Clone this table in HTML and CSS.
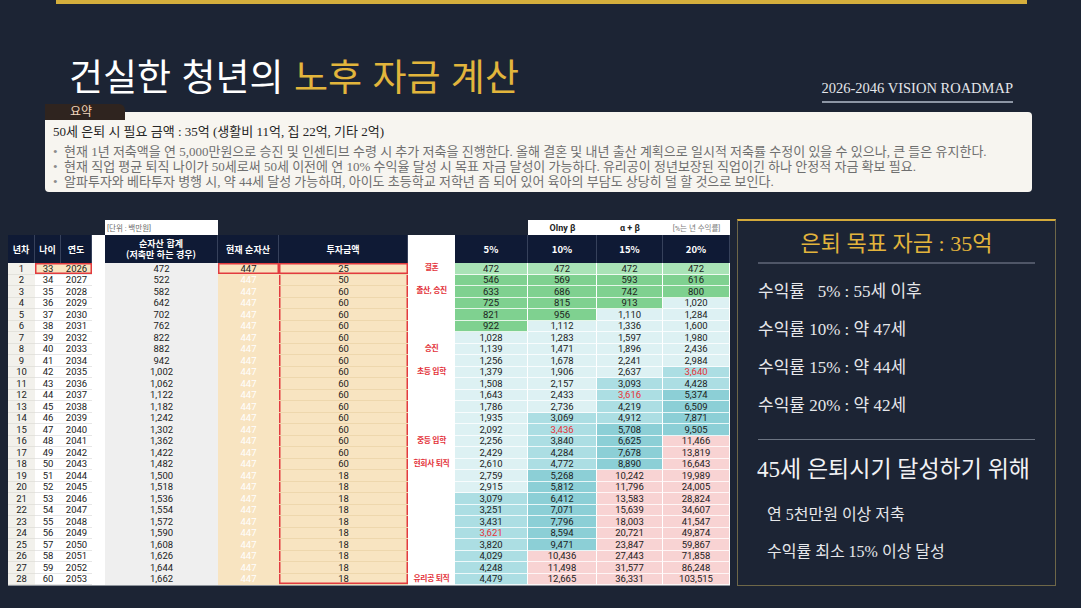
FILE: index.html
```html
<!DOCTYPE html>
<html lang="ko">
<head>
<meta charset="utf-8">
<title>건실한 청년의 노후 자금 계산</title>
<link rel="stylesheet" href="styles.css">
</head>
<body>
<div class="page">
  <div class="topbar"></div>
  <header class="head">
    <h1 class="title">건실한 청년의 <span class="gold">노후 자금 계산</span></h1>
    <div class="roadmap">2026-2046 VISION ROADMAP</div>
  </header>

  <section class="summary">
    <div class="tab">요약</div>
    <div class="sbox">
      <p class="lead">50세 은퇴 시 필요 금액 : 35억 (생활비 11억, 집 22억, 기타 2억)</p>
      <ul class="bullets">
        <li>현재 1년 저축액을 연 5,000만원으로 승진 및 인센티브 수령 시 추가 저축을 진행한다. 올해 결혼 및 내년 출산 계획으로 일시적 저축률 수정이 있을 수 있으나, 큰 들은 유지한다.</li>
        <li>현재 직업 평균 퇴직 나이가 50세로써 50세 이전에 연 10% 수익율 달성 시 목표 자금 달성이 가능하다. 유리공이 정년보장된 직업이긴 하나 안정적 자금 확보 필요.</li>
        <li>알파투자와 베타투자 병행 시, 약 44세 달성 가능하며, 아이도 초등학교 저학년 즘 되어 있어 육아의 부담도 상당히 덜 할 것으로 보인다.</li>
      </ul>
    </div>
  </section>

  <div class="main">
    <div class="sheet">
      <div class="labels">
        <span class="lu">[단위 : 백만원]</span>
        <span class="lb l10">Olny β</span>
        <span class="lb l15">α + β</span>
        <span class="lp">[%는 년 수익률]</span>
      </div>
      <div class="tbl">
        <div class="row hd">
          <span class="n">년차</span><span class="a">나이</span><span class="y">연도</span><span class="g"></span>
          <span class="s two">순자산 합계<br>(저축만 하는 경우)</span><span class="c">현재 순자산</span><span class="i">투자금액</span><span class="m"></span>
          <span class="v pct">5%</span><span class="v pct">10%</span><span class="v pct">15%</span><span class="v pct">20%</span>
        </div>
        <div class="row r1"><span class="n">1</span><span class="a">33</span><span class="y">2026</span><span class="g"></span><span class="s">472</span><span class="c">447</span><span class="i">25</span><span class="m">결혼</span><span class="v h0">472</span><span class="v h0">472</span><span class="v h0">472</span><span class="v h0">472</span></div>
        <div class="row"><span class="n">2</span><span class="a">34</span><span class="y">2027</span><span class="g"></span><span class="s">522</span><span class="c">447</span><span class="i">50</span><span class="m"></span><span class="v h1">546</span><span class="v h1">569</span><span class="v h1">593</span><span class="v h1">616</span></div>
        <div class="row"><span class="n">3</span><span class="a">35</span><span class="y">2028</span><span class="g"></span><span class="s">582</span><span class="c">447</span><span class="i">60</span><span class="m">출산, 승진</span><span class="v h1">633</span><span class="v h1">686</span><span class="v h1">742</span><span class="v h1">800</span></div>
        <div class="row"><span class="n">4</span><span class="a">36</span><span class="y">2029</span><span class="g"></span><span class="s">642</span><span class="c">447</span><span class="i">60</span><span class="m"></span><span class="v h1">725</span><span class="v h1">815</span><span class="v h1">913</span><span class="v h2">1,020</span></div>
        <div class="row"><span class="n">5</span><span class="a">37</span><span class="y">2030</span><span class="g"></span><span class="s">702</span><span class="c">447</span><span class="i">60</span><span class="m"></span><span class="v h1">821</span><span class="v h1">956</span><span class="v h2">1,110</span><span class="v h2">1,284</span></div>
        <div class="row"><span class="n">6</span><span class="a">38</span><span class="y">2031</span><span class="g"></span><span class="s">762</span><span class="c">447</span><span class="i">60</span><span class="m"></span><span class="v h1">922</span><span class="v h2">1,112</span><span class="v h2">1,336</span><span class="v h2">1,600</span></div>
        <div class="row"><span class="n">7</span><span class="a">39</span><span class="y">2032</span><span class="g"></span><span class="s">822</span><span class="c">447</span><span class="i">60</span><span class="m"></span><span class="v h2">1,028</span><span class="v h2">1,283</span><span class="v h2">1,597</span><span class="v h2">1,980</span></div>
        <div class="row"><span class="n">8</span><span class="a">40</span><span class="y">2033</span><span class="g"></span><span class="s">882</span><span class="c">447</span><span class="i">60</span><span class="m">승진</span><span class="v h2">1,139</span><span class="v h2">1,471</span><span class="v h2">1,896</span><span class="v h2">2,436</span></div>
        <div class="row"><span class="n">9</span><span class="a">41</span><span class="y">2034</span><span class="g"></span><span class="s">942</span><span class="c">447</span><span class="i">60</span><span class="m"></span><span class="v h2">1,256</span><span class="v h2">1,678</span><span class="v h2">2,241</span><span class="v h2">2,984</span></div>
        <div class="row"><span class="n">10</span><span class="a">42</span><span class="y">2035</span><span class="g"></span><span class="s">1,002</span><span class="c">447</span><span class="i">60</span><span class="m">초등 입학</span><span class="v h2">1,379</span><span class="v h2">1,906</span><span class="v h2">2,637</span><span class="v h3 rd">3,640</span></div>
        <div class="row"><span class="n">11</span><span class="a">43</span><span class="y">2036</span><span class="g"></span><span class="s">1,062</span><span class="c">447</span><span class="i">60</span><span class="m"></span><span class="v h2">1,508</span><span class="v h2">2,157</span><span class="v h3">3,093</span><span class="v h3">4,428</span></div>
        <div class="row"><span class="n">12</span><span class="a">44</span><span class="y">2037</span><span class="g"></span><span class="s">1,122</span><span class="c">447</span><span class="i">60</span><span class="m"></span><span class="v h2">1,643</span><span class="v h2">2,433</span><span class="v h3 rd">3,616</span><span class="v h4">5,374</span></div>
        <div class="row"><span class="n">13</span><span class="a">45</span><span class="y">2038</span><span class="g"></span><span class="s">1,182</span><span class="c">447</span><span class="i">60</span><span class="m"></span><span class="v h2">1,786</span><span class="v h2">2,736</span><span class="v h3">4,219</span><span class="v h4">6,509</span></div>
        <div class="row"><span class="n">14</span><span class="a">46</span><span class="y">2039</span><span class="g"></span><span class="s">1,242</span><span class="c">447</span><span class="i">60</span><span class="m"></span><span class="v h2">1,935</span><span class="v h3">3,069</span><span class="v h3">4,912</span><span class="v h4">7,871</span></div>
        <div class="row"><span class="n">15</span><span class="a">47</span><span class="y">2040</span><span class="g"></span><span class="s">1,302</span><span class="c">447</span><span class="i">60</span><span class="m"></span><span class="v h2">2,092</span><span class="v h3 rd">3,436</span><span class="v h4">5,708</span><span class="v h4">9,505</span></div>
        <div class="row"><span class="n">16</span><span class="a">48</span><span class="y">2041</span><span class="g"></span><span class="s">1,362</span><span class="c">447</span><span class="i">60</span><span class="m">중등 입학</span><span class="v h2">2,256</span><span class="v h3">3,840</span><span class="v h4">6,625</span><span class="v h5">11,466</span></div>
        <div class="row"><span class="n">17</span><span class="a">49</span><span class="y">2042</span><span class="g"></span><span class="s">1,422</span><span class="c">447</span><span class="i">60</span><span class="m"></span><span class="v h2">2,429</span><span class="v h3">4,284</span><span class="v h4">7,678</span><span class="v h5">13,819</span></div>
        <div class="row"><span class="n">18</span><span class="a">50</span><span class="y">2043</span><span class="g"></span><span class="s">1,482</span><span class="c">447</span><span class="i">60</span><span class="m">현회사 퇴직</span><span class="v h2">2,610</span><span class="v h3">4,772</span><span class="v h4">8,890</span><span class="v h5">16,643</span></div>
        <div class="row"><span class="n">19</span><span class="a">51</span><span class="y">2044</span><span class="g"></span><span class="s">1,500</span><span class="c">447</span><span class="i">18</span><span class="m"></span><span class="v h2">2,759</span><span class="v h4">5,268</span><span class="v h5">10,242</span><span class="v h5">19,989</span></div>
        <div class="row"><span class="n">20</span><span class="a">52</span><span class="y">2045</span><span class="g"></span><span class="s">1,518</span><span class="c">447</span><span class="i">18</span><span class="m"></span><span class="v h2">2,915</span><span class="v h4">5,812</span><span class="v h5">11,796</span><span class="v h5">24,005</span></div>
        <div class="row"><span class="n">21</span><span class="a">53</span><span class="y">2046</span><span class="g"></span><span class="s">1,536</span><span class="c">447</span><span class="i">18</span><span class="m"></span><span class="v h3">3,079</span><span class="v h4">6,412</span><span class="v h5">13,583</span><span class="v h5">28,824</span></div>
        <div class="row"><span class="n">22</span><span class="a">54</span><span class="y">2047</span><span class="g"></span><span class="s">1,554</span><span class="c">447</span><span class="i">18</span><span class="m"></span><span class="v h3">3,251</span><span class="v h4">7,071</span><span class="v h5">15,639</span><span class="v h5">34,607</span></div>
        <div class="row"><span class="n">23</span><span class="a">55</span><span class="y">2048</span><span class="g"></span><span class="s">1,572</span><span class="c">447</span><span class="i">18</span><span class="m"></span><span class="v h3">3,431</span><span class="v h4">7,796</span><span class="v h5">18,003</span><span class="v h5">41,547</span></div>
        <div class="row"><span class="n">24</span><span class="a">56</span><span class="y">2049</span><span class="g"></span><span class="s">1,590</span><span class="c">447</span><span class="i">18</span><span class="m"></span><span class="v h3 rd">3,621</span><span class="v h4">8,594</span><span class="v h5">20,721</span><span class="v h5">49,874</span></div>
        <div class="row"><span class="n">25</span><span class="a">57</span><span class="y">2050</span><span class="g"></span><span class="s">1,608</span><span class="c">447</span><span class="i">18</span><span class="m"></span><span class="v h3">3,820</span><span class="v h4">9,471</span><span class="v h5">23,847</span><span class="v h5">59,867</span></div>
        <div class="row"><span class="n">26</span><span class="a">58</span><span class="y">2051</span><span class="g"></span><span class="s">1,626</span><span class="c">447</span><span class="i">18</span><span class="m"></span><span class="v h3">4,029</span><span class="v h5">10,436</span><span class="v h5">27,443</span><span class="v h5">71,858</span></div>
        <div class="row"><span class="n">27</span><span class="a">59</span><span class="y">2052</span><span class="g"></span><span class="s">1,644</span><span class="c">447</span><span class="i">18</span><span class="m"></span><span class="v h3">4,248</span><span class="v h5">11,498</span><span class="v h5">31,577</span><span class="v h5">86,248</span></div>
        <div class="row last"><span class="n">28</span><span class="a">60</span><span class="y">2053</span><span class="g"></span><span class="s">1,662</span><span class="c">447</span><span class="i">18</span><span class="m">유리공 퇴직</span><span class="v h3">4,479</span><span class="v h5">12,665</span><span class="v h5">36,331</span><span class="v h5">103,515</span></div>
      </div>
    </div>

    <aside class="panel">
      <div class="ptitle">은퇴 목표 자금 : 35억</div>
      <ul class="rates">
        <li>수익률&nbsp;&nbsp;&nbsp;5% : 55세 이후</li>
        <li>수익률 10% : 약 47세</li>
        <li>수익률 15% : 약 44세</li>
        <li>수익률 20% : 약 42세</li>
      </ul>
      <div class="psep"></div>
      <div class="goal">45세 은퇴시기 달성하기 위해</div>
      <ul class="todo">
        <li>연 5천만원 이상 저축</li>
        <li>수익률 최소 15% 이상 달성</li>
      </ul>
    </aside>
  </div>
</div>
</body>
</html>
```

FILE: styles.css
```css
* { box-sizing: border-box; }

body {
  margin: 0;
  background: #1c2434;
  width: 1081px;
  height: 608px;
  overflow: hidden;
  font-family: "Noto Sans CJK KR", sans-serif;
}

.page {
  display: flex;
  flex-direction: column;
}

.topbar {
  height: 4px;
  margin: 0 54px 0 56px;
  background: #d4ae3c;
}

/* ---------- heading ---------- */
.head {
  height: 100px;
  display: flex;
  justify-content: space-between;
  align-items: flex-end;
  padding: 0 68px 0 69px;
}

.title {
  margin: 0 0 7px;
  font: 400 37px/44px "Noto Sans CJK KR", sans-serif;
  color: #ffffff;
  white-space: nowrap;
}

.gold { color: #e2b53c; }

.roadmap {
  margin-bottom: 1px;
  padding-bottom: 5px;
  border-bottom: 2px solid #8d96a5;
  font: 400 14.5px/16px "Liberation Serif", serif;
  color: #e4e6ea;
  white-space: nowrap;
}

/* ---------- summary ---------- */
.summary {
  margin: 0 49px 0 45px;
  display: flex;
  flex-direction: column;
}

.tab {
  position: relative;
  z-index: 1;
  width: 80px;
  height: 16px;
  padding-left: 25px;
  background: #2f241f;
  border-radius: 0 6px 0 0;
  color: #f3d7bf;
  font: 400 12px/16px "Liberation Serif", "Noto Sans CJK KR", serif;
}

.sbox {
  margin-top: -8px;
  background: #f7f5f0;
  border-radius: 4px;
  padding: 11px 10px 3px 8px;
  font-family: "Liberation Serif", "Noto Sans CJK KR", serif;
}

.lead {
  margin: 0 0 3px;
  font-size: 13px;
  line-height: 18px;
  color: #262626;
  white-space: nowrap;
}

.bullets {
  list-style: none;
  margin: 0;
  padding: 0;
}

.bullets li {
  display: flex;
  font-size: 13px;
  line-height: 15px;
  color: #6f6f6f;
  white-space: nowrap;
}

.bullets li::before {
  content: "•";
  width: 11px;
  flex: none;
  color: #8c8c8c;
}

/* ---------- main ---------- */
.main {
  margin-top: 27px;
  padding-left: 8px;
  display: flex;
  align-items: flex-start;
  gap: 7px;
}

.sheet {
  width: 722px;
  padding-top: 1px;
}

.labels,
.row {
  display: grid;
  grid-template-columns: 27px 26px 31px 13px 113px 61px 129px 47px 73px 69px 66px 67px;
}

.labels {
  height: 15px;
}

.labels span {
  background: #ffffff;
  display: flex;
  align-items: center;
  white-space: nowrap;
  font-family: Roboto, "Noto Sans CJK KR", sans-serif;
}

.lu {
  grid-column: 5;
  padding-left: 2px;
  font-size: 7.5px;
  color: #6a6a6a;
}

.lb {
  justify-content: center;
  font-size: 9px;
  font-weight: 700;
  color: #1f1f1f;
}

.l10 { grid-column: 10; }
.l15 { grid-column: 11; }

.lp {
  grid-column: 12;
  justify-content: center;
  font-size: 7.5px;
  color: #7a7a7a;
}

.tbl {
  background: #ffffff;
  border-bottom: 1px solid #8e949c;
}

.row {
  height: 11.5px;
}

.row > span {
  display: flex;
  align-items: center;
  justify-content: center;
  border-bottom: 1px solid transparent;
  font-family: Roboto, "Noto Sans CJK KR", sans-serif;
  font-size: 9.5px;
  line-height: 1;
  color: #1c1c1c;
  white-space: nowrap;
}

.row .n { background: #f2f1ec; border-bottom-color: #e3e2dc; }
.row .a,
.row .y { border-bottom-color: #e6e6e6; }
.row .s { background: #efefef; border-bottom-color: #efefef; }
.row .c { background: #f8e4c1; color: #ffffff; border-bottom-color: #f8e4c1; }
.row .i {
  background: #f8e4c1;
  border-bottom-color: #eed7ad;
  box-shadow: inset 1.5px 0 0 #e23b3f, inset -1.5px 0 0 #e23b3f;
}
.row .m {
  color: #e3323a;
  font-size: 7.8px;
  font-weight: 700;
  letter-spacing: -0.3px;
}

.row .v {
  border-right: 1px solid #ffffff;
  border-bottom-color: rgba(255, 255, 255, 0.8);
}

.h0 { background: #a9e3b6; }
.h1 { background: #7fd190; }
.h2 { background: #ddf1f3; }
.h3 { background: #acdee3; }
.h4 { background: #8ccfd6; }
.h5 { background: #f8d3d3; }
.row .rd { color: #e53238; }

/* first row highlights */
.r1 .a,
.r1 .y { background: #f8e4c1; }
.r1 .a { box-shadow: inset 1.5px 1.5px 0 #e23b3f, inset 0 -1.5px 0 #e23b3f; }
.r1 .y { box-shadow: inset -1.5px 1.5px 0 #e23b3f, inset 0 -1.5px 0 #e23b3f; }
.r1 .c { color: #1c1c1c; box-shadow: inset 0 0 0 1.5px #e23b3f; }
.r1 .i { box-shadow: inset 0 0 0 1.5px #e23b3f; }
.last .i { box-shadow: inset 1.5px 0 0 #e23b3f, inset -1.5px 0 0 #e23b3f, inset 0 -1.5px 0 #e23b3f; }

/* header row */
.row.hd { height: 28px; }

.row.hd > span {
  background: #0f1a35;
  color: #ffffff;
  font-family: "Noto Sans CJK KR", sans-serif;
  font-size: 9px;
  font-weight: 700;
  line-height: 11px;
  text-align: center;
  border-bottom: 0;
  border-right: 1px solid #36415b;
  box-shadow: none;
}

.row.hd > .g,
.row.hd > .m {
  background: #ffffff;
  border-right: 0;
}

.row.hd > .pct { font-size: 9.5px; }

/* ---------- right panel ---------- */
.panel {
  width: 319px;
  height: 367px;
  border: 1px solid #6e6748;
  border-top: 2px solid #d3aa3b;
  padding: 8px 20px 0;
  color: #e6e7ea;
  font-family: "Liberation Serif", "Noto Sans CJK KR", serif;
}

.ptitle {
  font-size: 22px;
  line-height: 30px;
  text-align: center;
  color: #e3b43c;
  padding-bottom: 3px;
  border-bottom: 2px solid #4f5667;
  white-space: nowrap;
}

.rates,
.todo {
  list-style: none;
  margin: 0;
  padding: 0;
}

.rates {
  margin-top: 9px;
}

.rates li {
  font-size: 17px;
  line-height: 38px;
  white-space: nowrap;
}

.psep {
  margin-top: 14px;
  border-top: 1px solid #6c7482;
}

.goal {
  margin: 15px 0 0 -1px;
  font-size: 23px;
  line-height: 30px;
  color: #f2f2f4;
  white-space: nowrap;
}

.todo {
  margin-top: 11px;
  padding-left: 9px;
}

.todo li {
  font-size: 16px;
  line-height: 37px;
  white-space: nowrap;
}
```
